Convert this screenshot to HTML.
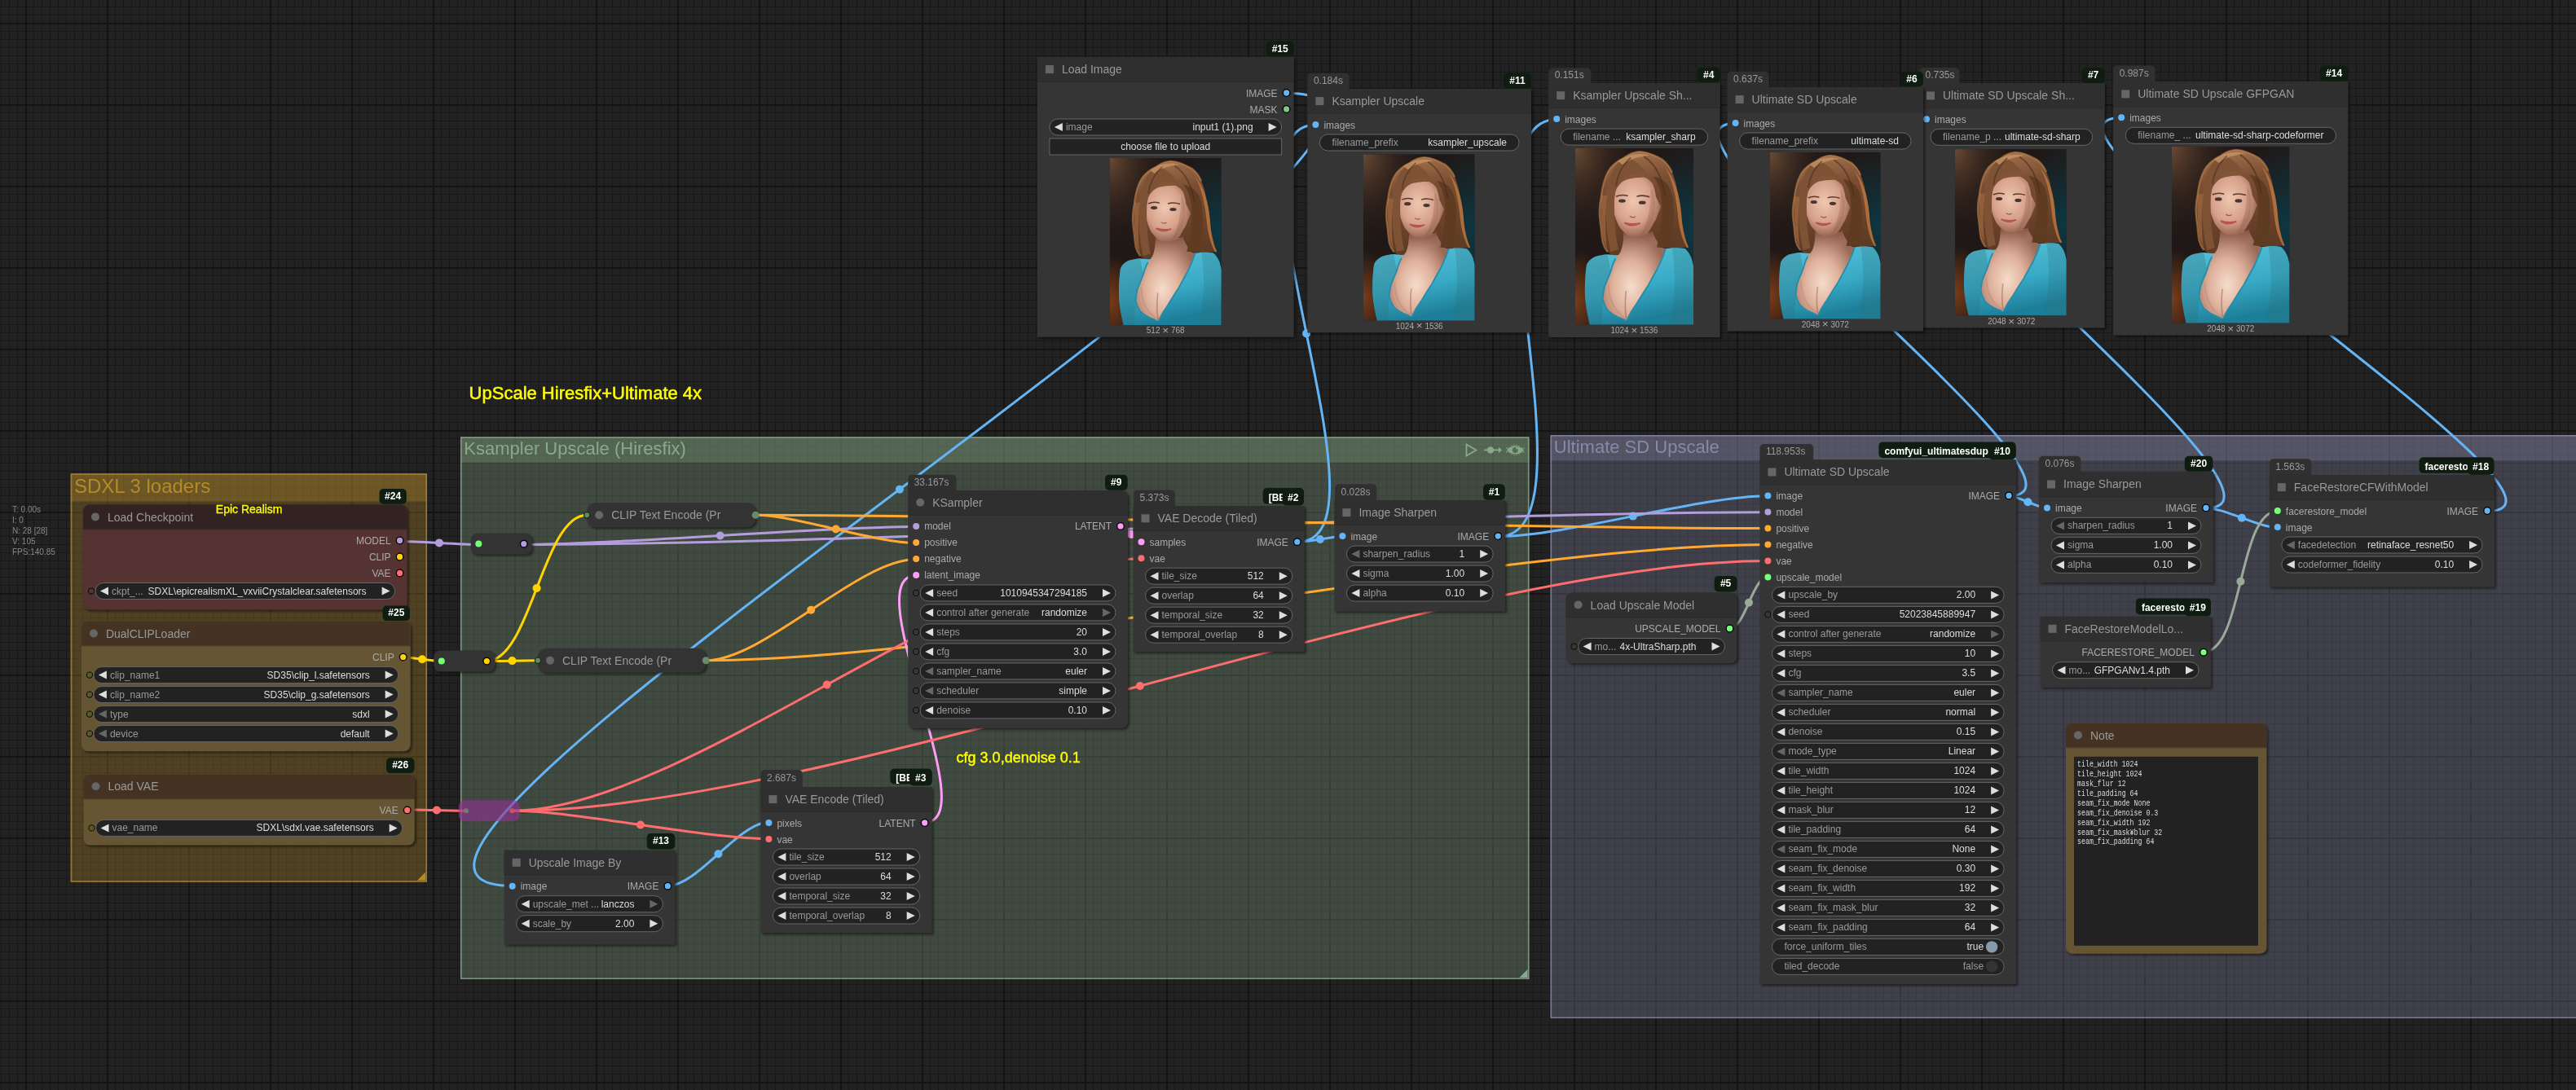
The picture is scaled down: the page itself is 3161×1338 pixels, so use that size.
<!DOCTYPE html>
<html><head><meta charset="utf-8"><title>ComfyUI workflow</title><style>html,body{margin:0;padding:0;background:#222;overflow:hidden;width:3161px;height:1338px}</style></head><body>
<svg width="3161" height="1338" viewBox="0 0 3161 1338" font-family="Liberation Sans, sans-serif" style="display:block">
<defs>
<filter id="nolcd" x="0" y="0" width="3161" height="1338" filterUnits="userSpaceOnUse"><feOffset dx="0" dy="0"/></filter>
<filter id="sh" x="-5%" y="-5%" width="110%" height="110%"><feGaussianBlur stdDeviation="1.5"/></filter>
<pattern id="gmin" width="10" height="10" patternUnits="userSpaceOnUse" x="1" y="8"><rect width="1" height="10" fill="#181818"/><rect width="10" height="1" fill="#181818"/></pattern>
<pattern id="gmaj" width="100" height="100" patternUnits="userSpaceOnUse" x="31" y="28"><rect width="2" height="100" fill="#141414"/><rect width="100" height="2" fill="#141414"/></pattern>
<symbol id="pt" viewBox="0 0 100 150" preserveAspectRatio="none"><defs><radialGradient id="pg1" cx="0.0" cy="0.0" r="0.55"><stop offset="0" stop-color="#6a4a34"/><stop offset="0.5" stop-color="#3e2c22" stop-opacity="0.6"/><stop offset="1" stop-color="#231a18" stop-opacity="0"/></radialGradient><radialGradient id="pg2" cx="1" cy="0.45" r="0.5"><stop offset="0" stop-color="#0c3844"/><stop offset="1" stop-color="#0c3844" stop-opacity="0"/></radialGradient><radialGradient id="pg3" cx="0" cy="0.86" r="0.28"><stop offset="0" stop-color="#7a3c18"/><stop offset="1" stop-color="#7a3c18" stop-opacity="0"/></radialGradient><linearGradient id="phr" x1="0" y1="0" x2="0.15" y2="1"><stop offset="0" stop-color="#a87650"/><stop offset="0.35" stop-color="#7a4e32"/><stop offset="1" stop-color="#5e3a24"/></linearGradient><radialGradient id="pfc" cx="0.42" cy="0.4" r="0.65"><stop offset="0" stop-color="#efc7b0"/><stop offset="0.6" stop-color="#d6a08a"/><stop offset="1" stop-color="#8e5c4a"/></radialGradient><radialGradient id="pch" cx="0.45" cy="0.62" r="0.6"><stop offset="0" stop-color="#f6dccc"/><stop offset="0.5" stop-color="#deb09a"/><stop offset="1" stop-color="#9a6a58"/></radialGradient><linearGradient id="pbl" x1="0" y1="0" x2="0.3" y2="1"><stop offset="0" stop-color="#5cc2d8"/><stop offset="0.6" stop-color="#38aac6"/><stop offset="1" stop-color="#1e7e98"/></linearGradient><filter id="pbf" x="-5%" y="-5%" width="110%" height="110%"><feGaussianBlur stdDeviation="0.55"/></filter><linearGradient id="pnk" x1="0" y1="0" x2="0" y2="1"><stop offset="0" stop-color="#7e4e3e"/><stop offset="1" stop-color="#c08c78" stop-opacity="0"/></linearGradient></defs><rect width="100" height="150" fill="#201816"/><rect width="100" height="150" fill="url(#pg1)"/><rect width="100" height="150" fill="url(#pg2)"/><rect width="100" height="150" fill="url(#pg3)"/><g filter="url(#pbf)"><path d="M54.6 2.8C59 3 64 4 73.8 9.6C78 13 80 16 82 20.6C84 26 85.5 30 86 34.4C87 40 88 44 88.8 48.2C89.5 54 90 58 90.2 61.9C91 67 92 71 92.9 74.3C93.5 78 94.5 81 95.6 83.9L82 85.3L73.8 82.6L60 86L40 88L32.8 92.2L27.3 88C25 85 24 83 23.2 79.8C22.5 75 22 72 21.9 68.8C21 62 20.5 58 20.5 55C20.5 50 21 45 21.9 41.3C22.5 36 23.5 31 24.6 27.5C26 23 28 19 30 16.5C34 12 37 10 41 8.3C45 5 50 3 54.6 2.8Z" fill="url(#phr)"/><path d="M9.6 99C11 96 13 94 16.4 92.2C20 91 24 90.3 27.3 90.1L34.2 90.8L60 88L76.5 85.3L82 84.6C86 84.5 90 84.6 92.9 85.3C95 87 97 90 98.4 93.6L100 100L100 150L12.3 150C10 140 8.5 132 8.2 123.9C8 115 8.5 106 9.6 99Z" fill="url(#pbl)"/><path d="M41 72C41 78 40 84 38.3 88L34.2 93.6C32 97 31 101 30 104.6C28 110 26 114 24.6 118.3C23.8 122 23.3 125 23.2 128C24 132 25.5 135 27.3 137.6C30 140 33 142 35.5 143.1C38 144 40 145 42.3 145.9L43.7 145.9C46 141 49 136 51.9 132.1C55 127 58 122 61.5 117C64 112 67 107 69.7 101.8C72 97 74 93 75.1 89.4L76.5 85.3C74 85 72 84 71 82C69 78 66.5 75 65.6 71.6Z" fill="url(#pch)"/><path d="M41 70C41 78 40.5 83 39 87C46 90 58 88 68 82C67 78 66 75 65.6 70C58 76 48 76 41 70Z" fill="url(#pnk)"/><path d="M43 121Q41.5 134 43.2 145" stroke="#8e5e4c" stroke-width="1.1" fill="none" opacity="0.5"/><path d="M28 116Q29 136 42 144" stroke="#b07e6c" stroke-width="1.2" fill="none" opacity="0.35"/><path d="M32.8 44C33.5 39 34 37 34.2 35.8C37 30 41 27 45 26.1C50 25 55 24.5 58.7 24.8C62 26 64 28 65.6 30.3C67 34 68 38 68.3 41.3L72.4 49.5C71 54 69.5 57 68.3 60.5C66 64 64.5 67 62.8 70.2C60 73 57 74.5 54.6 75C51 75.5 48 75 45 74.3C42 72 39 69 36.9 66C35 62 33.5 58 32.8 55C32.5 51 32.5 47 32.8 44Z" fill="url(#pfc)"/><path d="M64 34C69 42 68.5 54 64 64C61 69 58 72.5 55 74.5C60 66 64 54 64 34Z" fill="#7e4e40" opacity="0.25"/><path d="M34.5 41Q39 38.8 44.5 40.5" stroke="#5a3a2c" stroke-width="1.1" fill="none"/><path d="M52 41Q57 39.3 63 41.3" stroke="#5a3a2c" stroke-width="1.1" fill="none"/><ellipse cx="39.6" cy="44.7" rx="3" ry="1.5" fill="#4a3630"/><ellipse cx="56.7" cy="46.1" rx="3" ry="1.5" fill="#4a3630"/><path d="M46 57.5Q48 59.5 51 58" stroke="#9a6050" stroke-width="0.9" fill="none"/><path d="M41.5 63.2Q47.5 67.8 55 63.6Q48 65.2 41.5 63.2Z" fill="#b85a58" stroke="#b45654" stroke-width="1.2"/><path d="M40 9C31 16 26.5 28 26 42C25.5 58 26.5 74 30 88L36.5 86C33.5 72 32.5 56 33.2 42C34 32 38 26 45 23C50 21 56 21 62 24C57 15 48 6 40 9Z" fill="#7e5236"/><path d="M66 24C71 30 73 38 73.5 48C74 60 72 72 69 84L80 85C83 72 84 58 83 46C82 34 77 26 66 24Z" fill="#5e3a24"/><path d="M76 16C82 26 85 40 86.5 54C87.5 66 90 77 94.5 84.5L96 84C92 76 90.5 66 89.8 56C88.5 42 86 28 76 16Z" fill="#c47c42" opacity="0.75"/><path d="M22 40C21.5 52 22 66 24 78L27 86C25 72 25 54 27 40Z" fill="#a66c42" opacity="0.6"/><path d="M36 11C44 5 54 3.5 63 6C54 7 46 9 40 14Z" fill="#c49466" opacity="0.8"/><path d="M47 8C40 14 36 22 34.5 32" stroke="#4e3020" stroke-width="1.3" fill="none" opacity="0.6"/><path d="M58 7C66 12 73 22 76 40" stroke="#4a2c1c" stroke-width="1.3" fill="none" opacity="0.6"/><path d="M27.3 88C25 85 24 83 23.2 79.8C22.5 75 22 72 21.9 68.8C21 62 20.5 58 20.5 55C20.5 50 21 45 21.9 41.3C22.5 36 23.5 31 24.6 27.5C26 23 28 19 30 16.5C34 12 37 10 41 8.3C45 5 50 3 54.6 2.8C59 3 64 4 73.8 9.6C78 13 80 16 82 20.6" stroke="#c88a50" stroke-width="1.6" fill="none" opacity="0.55"/><path d="M9.6 99C11 96 13 94 16.4 92.2C20 91 24 90.3 27.3 90.1L30 104.6L24.6 118.3L23.2 128L22 150L12.3 150C10 140 8.5 132 8.2 123.9C8 115 8.5 106 9.6 99Z" fill="#2a6e7c" opacity="0.3"/><path d="M82 84.6C86 84.5 90 84.6 92.9 85.3C95 87 97 90 98.4 93.6L100 100L100 150L80 150C84 130 86 110 82 84.6Z" fill="#2a6e7c" opacity="0.25"/><path d="M34.2 93.6C32 97 31 101 30 104.6C28 110 26 114 24.6 118.3C23.8 122 23.3 125 23.2 128C24 132 25.5 135 27.3 137.6C30 140 33 142 35.5 143.1C38 144 40 145 42.3 145.9" stroke="#268ca8" stroke-width="1.3" fill="none"/><path d="M43.7 145.9C46 141 49 136 51.9 132.1C55 127 58 122 61.5 117C64 112 67 107 69.7 101.8C72 97 74 93 75.1 89.4L76.5 85.3" stroke="#268ca8" stroke-width="1.3" fill="none"/></g></symbol>
</defs>
<g filter="url(#nolcd)">
<rect width="3161" height="1338" fill="#222"/>
<rect width="3161" height="1338" fill="url(#gmin)"/>
<rect width="3161" height="1338" fill="url(#gmaj)"/>
<text x="15" y="629" font-size="10" fill="#888">T: 0.00s</text>
<text x="15" y="642" font-size="10" fill="#888">I: 0</text>
<text x="15" y="655" font-size="10" fill="#888">N: 28 [28]</text>
<text x="15" y="668" font-size="10" fill="#888">V: 105</text>
<text x="15" y="681" font-size="10" fill="#888">FPS:140.85</text>
<rect x="86.7" y="581.3" width="437.3" height="501.5" fill="rgba(181,139,42,0.3)"/>
<rect x="86.7" y="581.3" width="437.3" height="34.2" fill="rgba(181,139,42,0.3)"/>
<rect x="87.5" y="582.1" width="435.7" height="499.9" fill="none" stroke="#b58b2a" stroke-width="1.6" stroke-opacity="0.8"/>
<path d="M522 1070.8L522 1080.8L512 1080.8Z" fill="#b58b2a"/>
<text x="91" y="604.9" font-size="24" fill="#b58b2a">SDXL 3 loaders</text>
<rect x="565" y="536.3" width="1311.5" height="665.7" fill="rgba(136,170,136,0.3)"/>
<rect x="565" y="536.3" width="1311.5" height="31.4" fill="rgba(136,170,136,0.3)"/>
<rect x="565.8" y="537.1" width="1309.9" height="664.1" fill="none" stroke="#8A8" stroke-width="1.6" stroke-opacity="0.8"/>
<path d="M1874.5 1190L1874.5 1200L1864.5 1200Z" fill="#8A8"/>
<text x="569.3" y="557.9" font-size="22" fill="#8A8">Ksampler Upscale (Hiresfix)</text>
<rect x="1902.5" y="534" width="1400" height="716" fill="rgba(136,136,170,0.3)"/>
<rect x="1902.5" y="534" width="1400" height="31.4" fill="rgba(136,136,170,0.3)"/>
<rect x="1903.3" y="534.8" width="1398.4" height="714.4" fill="none" stroke="#88A" stroke-width="1.6" stroke-opacity="0.8"/>
<path d="M3300.5 1238L3300.5 1248L3290.5 1248Z" fill="#88A"/>
<text x="1906.8" y="555.6" font-size="22" fill="#88A">Ultimate SD Upscale</text>
<path d="M1799.5 545.5L1811.5 552.5L1799.5 559.5Z" fill="none" stroke="#8A8" stroke-width="1.8"/>
<path d="M1821 552.4H1840" stroke="#8A8" stroke-width="1.8"/><circle cx="1829" cy="552.4" r="4.2" fill="#8A8"/><path d="M1839 548.5L1843 552.4L1839 556.3Z" fill="#8A8"/>
<path d="M1848.8 552.4Q1859.4 542.6 1870 552.4Q1859.4 562.2 1848.8 552.4Z" fill="#8A8"/><circle cx="1859.2" cy="552.4" r="3.5" fill="#566a56"/><rect x="1860" y="549.7" width="1.6" height="1.6" fill="#8A8"/>
<path d="M1851.9 549.9V548.7M1851.9 554.9V556.1M1854.9 548.3V546.7M1854.9 556.5V558.1M1857.9 547.5V545.7M1857.9 557.3V559.1M1860.9 547.5V545.7M1860.9 557.3V559.1M1863.9 548.3V546.7M1863.9 556.5V558.1M1866.9 549.9V548.7M1866.9 554.9V556.1M1848.3 549.5L1850 550.8M1848.3 555.3L1850 554M1870.5 549.5L1868.8 550.8M1870.5 555.3L1868.8 554" stroke="#8A8" stroke-width="1.1" fill="none"/>
<text x="575.6" y="490" font-size="22" fill="#ff0" stroke="#ff0" stroke-width="0.5">UpScale Hiresfix+Ultimate 4x</text>
<text x="1173.6" y="936.3" font-size="18" fill="#ff0" stroke="#ff0" stroke-width="0.4">cfg 3.0,denoise 0.1</text>
<path d="M1579 114.2C1919.1 114.2 288.6 1087.4 628.7 1087.4" fill="none" stroke="#64B5F6" stroke-width="3"/>
<circle cx="1103.9" cy="600.8" r="5" fill="#64B5F6"/>
<path d="M1591.8 665.4C1719.9 665.4 1486.3 153.3 1614.4 153.3" fill="none" stroke="#64B5F6" stroke-width="3"/>
<circle cx="1603.1" cy="409.4" r="5" fill="#64B5F6"/>
<path d="M1591.8 665.4C1606 665.4 1633.8 658.6 1648 658.6" fill="none" stroke="#64B5F6" stroke-width="3"/>
<circle cx="1619.9" cy="662" r="5" fill="#64B5F6"/>
<path d="M1838.2 658.6C1967.5 658.6 1781.2 146.4 1910.5 146.4" fill="none" stroke="#64B5F6" stroke-width="3"/>
<circle cx="1874.3" cy="402.5" r="5" fill="#64B5F6"/>
<path d="M1838.2 658.6C1922 658.6 2085.7 608.7 2169.5 608.7" fill="none" stroke="#64B5F6" stroke-width="3"/>
<circle cx="2003.8" cy="633.6" r="5" fill="#64B5F6"/>
<path d="M819.4 1087.4C856 1087.4 906.8 1009.3 943.4 1009.3" fill="none" stroke="#64B5F6" stroke-width="3"/>
<circle cx="881.4" cy="1048.3" r="5" fill="#64B5F6"/>
<path d="M2464.8 608.7C2606.6 608.7 1987.8 151.2 2129.6 151.2" fill="none" stroke="#64B5F6" stroke-width="3"/>
<circle cx="2297.2" cy="379.9" r="5" fill="#64B5F6"/>
<path d="M2464.8 608.7C2477.2 608.7 2499.6 623.7 2512 623.7" fill="none" stroke="#64B5F6" stroke-width="3"/>
<circle cx="2488.4" cy="616.2" r="5" fill="#64B5F6"/>
<path d="M2707 623.7C2853.8 623.7 2216.7 147.5 2363.5 147.5" fill="none" stroke="#64B5F6" stroke-width="3"/>
<circle cx="2535.2" cy="385.6" r="5" fill="#64B5F6"/>
<path d="M2707 623.7C2729.7 623.7 2772.1 647.6 2794.8 647.6" fill="none" stroke="#64B5F6" stroke-width="3"/>
<circle cx="2750.9" cy="635.7" r="5" fill="#64B5F6"/>
<path d="M3052 627.4C3216.8 627.4 2438.4 144.5 2603.2 144.5" fill="none" stroke="#64B5F6" stroke-width="3"/>
<circle cx="2827.6" cy="385.9" r="5" fill="#64B5F6"/>
<path d="M490.6 664.5C514.8 664.5 563.2 668.4 587.4 668.4" fill="none" stroke="#B39DDB" stroke-width="3"/>
<circle cx="539" cy="666.4" r="5" fill="#B39DDB"/>
<path d="M643.2 668.4C763.6 668.4 1003.8 646.6 1124.2 646.6" fill="none" stroke="#B39DDB" stroke-width="3"/>
<circle cx="883.7" cy="657.5" r="5" fill="#B39DDB"/>
<path d="M643.2 668.4C1024.9 668.4 1787.7 628.7 2169.4 628.7" fill="none" stroke="#B39DDB" stroke-width="3"/>
<circle cx="1406.3" cy="648.5" r="5" fill="#B39DDB"/>
<path d="M494.5 806.8C506.4 806.8 529.9 811.6 541.8 811.6" fill="none" stroke="#FFD500" stroke-width="3"/>
<circle cx="518.1" cy="809.2" r="5" fill="#FFD500"/>
<path d="M597 811.6C651.4 811.6 665.8 632.3 720.2 632.3" fill="none" stroke="#FFD500" stroke-width="3"/>
<circle cx="658.6" cy="722" r="5" fill="#FFD500"/>
<path d="M597 811.6C612.8 811.6 644.2 810.7 660 810.7" fill="none" stroke="#FFD500" stroke-width="3"/>
<circle cx="628.5" cy="811.1" r="5" fill="#FFD500"/>
<path d="M927.2 632.3C977.2 632.3 1074.2 666.6 1124.2 666.6" fill="none" stroke="#FFA931" stroke-width="3"/>
<circle cx="1025.7" cy="649.5" r="5" fill="#FFA931"/>
<path d="M927.2 632.3C1237.8 632.3 1858.8 648.6 2169.4 648.6" fill="none" stroke="#FFA931" stroke-width="3"/>
<circle cx="1548.3" cy="640.5" r="5" fill="#FFA931"/>
<path d="M866.2 810.7C937.8 810.7 1052.6 686.6 1124.2 686.6" fill="none" stroke="#FFA931" stroke-width="3"/>
<circle cx="995.2" cy="748.7" r="5" fill="#FFA931"/>
<path d="M866.2 810.7C1193.9 810.7 1841.7 668.6 2169.4 668.6" fill="none" stroke="#FFA931" stroke-width="3"/>
<circle cx="1517.8" cy="739.7" r="5" fill="#FFA931"/>
<path d="M1375 646.6C1383 646.6 1393 665.4 1401 665.4" fill="none" stroke="#FF9CF9" stroke-width="3"/>
<circle cx="1388" cy="656" r="5" fill="#FF9CF9"/>
<path d="M1134.7 1009.3C1210.4 1009.3 1048.5 706.5 1124.2 706.5" fill="none" stroke="#FF9CF9" stroke-width="3"/>
<circle cx="1129.5" cy="857.9" r="5" fill="#FF9CF9"/>
<path d="M499.6 993.8C517.7 993.8 554 995.3 572.1 995.3" fill="none" stroke="#FF6E6E" stroke-width="3"/>
<circle cx="535.9" cy="994.5" r="5" fill="#FF6E6E"/>
<path d="M628.4 995.3C707.6 995.3 864.2 1029.6 943.4 1029.6" fill="none" stroke="#FF6E6E" stroke-width="3"/>
<circle cx="785.9" cy="1012.5" r="5" fill="#FF6E6E"/>
<path d="M628.4 995.3C836.5 995.3 1192.9 685.7 1401 685.7" fill="none" stroke="#FF6E6E" stroke-width="3"/>
<circle cx="1014.7" cy="840.5" r="5" fill="#FF6E6E"/>
<path d="M628.4 995.3C1021.2 995.3 1776.6 688.6 2169.4 688.6" fill="none" stroke="#FF6E6E" stroke-width="3"/>
<circle cx="1398.9" cy="842" r="5" fill="#FF6E6E"/>
<path d="M2122.5 771C2142 771 2149.9 708.6 2169.4 708.6" fill="none" stroke="#9A9" stroke-width="3"/>
<circle cx="2146" cy="739.8" r="5" fill="#9A9"/>
<path d="M2704 800.1C2752.8 800.1 2746 627.4 2794.8 627.4" fill="none" stroke="#9A9" stroke-width="3"/>
<circle cx="2749.4" cy="713.8" r="5" fill="#9A9"/>
<rect x="465.5" y="600" width="33.3" height="18.8" rx="5" fill="#0f1c10"/>
<text x="482.1" y="613" font-size="12" fill="#fff" text-anchor="middle" font-weight="bold">#24</text>
<rect x="104" y="621.5" width="397.6" height="129.1" rx="8" fill="rgba(0,0,0,0.5)" filter="url(#sh)"/>
<rect x="102" y="619.5" width="397.6" height="129.1" rx="8" fill="#533"/>
<path d="M102 649.5V627.5A8 8 0 0 1 110 619.5H491.6A8 8 0 0 1 499.6 627.5V649.5Z" fill="#322"/>
<circle cx="117" cy="634.4" r="5" fill="#666"/>
<rect x="102" y="649.5" width="397.6" height="1" fill="rgba(0,0,0,0.18)"/>
<text x="132" y="639.5" font-size="14" fill="#999">Load Checkpoint</text>
<circle cx="490.6" cy="663.5" r="4.3" fill="#B39DDB" stroke="#000" stroke-width="1.3"/>
<text x="479.6" y="668" font-size="12" fill="#AAA" text-anchor="end">MODEL</text>
<circle cx="490.6" cy="683.5" r="4.3" fill="#FFD500" stroke="#000" stroke-width="1.3"/>
<text x="479.6" y="688" font-size="12" fill="#AAA" text-anchor="end">CLIP</text>
<circle cx="490.6" cy="703.5" r="4.3" fill="#FF6E6E" stroke="#000" stroke-width="1.3"/>
<text x="479.6" y="708" font-size="12" fill="#AAA" text-anchor="end">VAE</text>
<circle cx="112" cy="725.5" r="3.6" fill="rgba(0,128,0,0.12)" stroke="#0a0a0a" stroke-width="1.05"/>
<rect x="117" y="715.5" width="367.6" height="20" rx="10" fill="#222" stroke="#666" stroke-width="1"/>
<path d="M133 720.5L123 725.5L133 730.5Z" fill="#DDD"/>
<path d="M468.6 720.5L478.6 725.5L468.6 730.5Z" fill="#DDD"/>
<text x="137" y="729.5" font-size="12" fill="#999">ckpt_...</text>
<text x="449.6" y="729.5" font-size="12" fill="#DDD" text-anchor="end">SDXL\epicrealismXL_vxviiCrystalclear.safetensors</text>
<text x="305.7" y="630.4" font-size="14" fill="#ff0" text-anchor="middle" stroke="#ff0" stroke-width="0.3">Epic Realism</text>
<rect x="469.6" y="743.4" width="33.4" height="18.7" rx="5" fill="#0f1c10"/>
<text x="486.3" y="756.4" font-size="12" fill="#fff" text-anchor="middle" font-weight="bold">#25</text>
<rect x="101.9" y="764.6" width="403.8" height="159.7" rx="8" fill="rgba(0,0,0,0.5)" filter="url(#sh)"/>
<rect x="99.9" y="762.6" width="403.8" height="159.7" rx="8" fill="#653"/>
<path d="M99.9 792.6V770.6A8 8 0 0 1 107.9 762.6H495.7A8 8 0 0 1 503.7 770.6V792.6Z" fill="#432"/>
<circle cx="114.9" cy="777.5" r="5" fill="#666"/>
<rect x="99.9" y="792.6" width="403.8" height="1" fill="rgba(0,0,0,0.18)"/>
<text x="129.9" y="782.6" font-size="14" fill="#999">DualCLIPLoader</text>
<circle cx="494.7" cy="806.6" r="4.3" fill="#FFD500" stroke="#000" stroke-width="1.3"/>
<text x="483.7" y="811.1" font-size="12" fill="#AAA" text-anchor="end">CLIP</text>
<circle cx="109.9" cy="828.6" r="3.6" fill="rgba(0,128,0,0.12)" stroke="#0a0a0a" stroke-width="1.05"/>
<rect x="114.9" y="818.6" width="373.8" height="20" rx="10" fill="#222" stroke="#666" stroke-width="1"/>
<path d="M130.9 823.6L120.9 828.6L130.9 833.6Z" fill="#DDD"/>
<path d="M472.7 823.6L482.7 828.6L472.7 833.6Z" fill="#DDD"/>
<text x="134.9" y="832.6" font-size="12" fill="#999">clip_name1</text>
<text x="453.7" y="832.6" font-size="12" fill="#DDD" text-anchor="end">SD35\clip_l.safetensors</text>
<circle cx="109.9" cy="852.6" r="3.6" fill="rgba(0,128,0,0.12)" stroke="#0a0a0a" stroke-width="1.05"/>
<rect x="114.9" y="842.6" width="373.8" height="20" rx="10" fill="#222" stroke="#666" stroke-width="1"/>
<path d="M130.9 847.6L120.9 852.6L130.9 857.6Z" fill="#DDD"/>
<path d="M472.7 847.6L482.7 852.6L472.7 857.6Z" fill="#DDD"/>
<text x="134.9" y="856.6" font-size="12" fill="#999">clip_name2</text>
<text x="453.7" y="856.6" font-size="12" fill="#DDD" text-anchor="end">SD35\clip_g.safetensors</text>
<circle cx="109.9" cy="876.6" r="3.6" fill="rgba(0,128,0,0.12)" stroke="#0a0a0a" stroke-width="1.05"/>
<rect x="114.9" y="866.6" width="373.8" height="20" rx="10" fill="#222" stroke="#666" stroke-width="1"/>
<path d="M130.9 871.6L120.9 876.6L130.9 881.6Z" fill="#666"/>
<path d="M472.7 871.6L482.7 876.6L472.7 881.6Z" fill="#DDD"/>
<text x="134.9" y="880.6" font-size="12" fill="#999">type</text>
<text x="453.7" y="880.6" font-size="12" fill="#DDD" text-anchor="end">sdxl</text>
<circle cx="109.9" cy="900.6" r="3.6" fill="rgba(0,128,0,0.12)" stroke="#0a0a0a" stroke-width="1.05"/>
<rect x="114.9" y="890.6" width="373.8" height="20" rx="10" fill="#222" stroke="#666" stroke-width="1"/>
<path d="M130.9 895.6L120.9 900.6L130.9 905.6Z" fill="#666"/>
<path d="M472.7 895.6L482.7 900.6L472.7 905.6Z" fill="#DDD"/>
<text x="134.9" y="904.6" font-size="12" fill="#999">device</text>
<text x="453.7" y="904.6" font-size="12" fill="#DDD" text-anchor="end">default</text>
<rect x="474" y="930.2" width="34.5" height="18.8" rx="5" fill="#0f1c10"/>
<text x="491.2" y="943.2" font-size="12" fill="#fff" text-anchor="middle" font-weight="bold">#26</text>
<rect x="104.5" y="952.4" width="406.2" height="87.1" rx="8" fill="rgba(0,0,0,0.5)" filter="url(#sh)"/>
<rect x="102.5" y="950.4" width="406.2" height="87.1" rx="8" fill="#653"/>
<path d="M102.5 980.4V958.4A8 8 0 0 1 110.5 950.4H500.7A8 8 0 0 1 508.7 958.4V980.4Z" fill="#432"/>
<circle cx="117.5" cy="965.3" r="5" fill="#666"/>
<rect x="102.5" y="980.4" width="406.2" height="1" fill="rgba(0,0,0,0.18)"/>
<text x="132.5" y="970.4" font-size="14" fill="#999">Load VAE</text>
<circle cx="499.7" cy="994.4" r="4.3" fill="#FF6E6E" stroke="#000" stroke-width="1.3"/>
<text x="488.7" y="998.9" font-size="12" fill="#AAA" text-anchor="end">VAE</text>
<circle cx="112.5" cy="1016.4" r="3.6" fill="rgba(0,128,0,0.12)" stroke="#0a0a0a" stroke-width="1.05"/>
<rect x="117.5" y="1006.4" width="376.2" height="20" rx="10" fill="#222" stroke="#666" stroke-width="1"/>
<path d="M133.5 1011.4L123.5 1016.4L133.5 1021.4Z" fill="#DDD"/>
<path d="M477.7 1011.4L487.7 1016.4L477.7 1021.4Z" fill="#DDD"/>
<text x="137.5" y="1020.4" font-size="12" fill="#999">vae_name</text>
<text x="458.7" y="1020.4" font-size="12" fill="#DDD" text-anchor="end">SDXL\sdxl.vae.safetensors</text>
<rect x="579.8" y="656.6" width="75" height="26" rx="8" fill="rgba(0,0,0,0.5)" filter="url(#sh)"/>
<rect x="577.8" y="654.6" width="75" height="26" rx="8" fill="#333"/>
<circle cx="587.3" cy="667.6" r="4" fill="#7F7"/>
<circle cx="642.8" cy="667.6" r="4.3" fill="#B39DDB" stroke="#000" stroke-width="1.3"/>
<rect x="534.3" y="800.6" width="75" height="26" rx="8" fill="rgba(0,0,0,0.5)" filter="url(#sh)"/>
<rect x="532.3" y="798.6" width="75" height="26" rx="8" fill="#333"/>
<circle cx="541.8" cy="811.6" r="4" fill="#7F7"/>
<circle cx="597.3" cy="811.6" r="4.3" fill="#FFD500" stroke="#000" stroke-width="1.3"/>
<rect x="562.6" y="982.3" width="75" height="26" rx="8" fill="rgba(150,50,150,0.6)"/>
<circle cx="572.1" cy="995.3" r="3" fill="#777"/>
<circle cx="628.4" cy="995.3" r="3" fill="#c55"/>
<rect x="722.2" y="619.3" width="207" height="30" rx="10" fill="rgba(0,0,0,0.5)" filter="url(#sh)"/>
<rect x="720.2" y="617.3" width="207" height="30" rx="10" fill="#333"/>
<circle cx="735.2" cy="632.3" r="5" fill="#666"/>
<text x="750.2" y="637.3" font-size="14" fill="#999">CLIP Text Encode (Pr</text>
<circle cx="720.2" cy="632.3" r="3.6" fill="#5c8f5c" stroke="#1c2c1c" stroke-width="1.3"/>
<circle cx="927.2" cy="632.3" r="4.5" fill="#6b8a6b"/>
<rect x="662" y="797.7" width="206.3" height="30" rx="10" fill="rgba(0,0,0,0.5)" filter="url(#sh)"/>
<rect x="660" y="795.7" width="206.3" height="30" rx="10" fill="#333"/>
<circle cx="675" cy="810.7" r="5" fill="#666"/>
<text x="690" y="815.7" font-size="14" fill="#999">CLIP Text Encode (Pr</text>
<circle cx="660" cy="810.7" r="3.6" fill="#5c8f5c" stroke="#1c2c1c" stroke-width="1.3"/>
<circle cx="866.3" cy="810.7" r="4.5" fill="#6b8a6b"/>
<rect x="793.7" y="1023.1" width="34.7" height="19.3" rx="5" fill="#0f1c10"/>
<text x="811" y="1036.3" font-size="12" fill="#fff" text-anchor="middle" font-weight="bold">#13</text>
<rect x="620.7" y="1045.7" width="209.7" height="115.9" rx="0" fill="rgba(0,0,0,0.5)" filter="url(#sh)"/>
<rect x="618.7" y="1043.7" width="209.7" height="115.9" rx="0" fill="#353535"/>
<rect x="618.7" y="1043.7" width="209.7" height="30" fill="#2f2f2f"/>
<rect x="628.7" y="1053.8" width="10" height="10" fill="#666"/>
<rect x="618.7" y="1073.7" width="209.7" height="1" fill="rgba(0,0,0,0.18)"/>
<text x="648.7" y="1063.7" font-size="14" fill="#999">Upscale Image By</text>
<circle cx="628.7" cy="1087.7" r="4" fill="#64B5F6"/>
<text x="638.7" y="1092.2" font-size="12" fill="#AAA">image</text>
<circle cx="819.4" cy="1087.7" r="4.3" fill="#64B5F6" stroke="#000" stroke-width="1.3"/>
<text x="808.4" y="1092.2" font-size="12" fill="#AAA" text-anchor="end">IMAGE</text>
<rect x="633.7" y="1099.7" width="179.7" height="20" rx="10" fill="#222" stroke="#666" stroke-width="1"/>
<path d="M649.7 1104.7L639.7 1109.7L649.7 1114.7Z" fill="#DDD"/>
<path d="M797.4 1104.7L807.4 1109.7L797.4 1114.7Z" fill="#666"/>
<text x="653.7" y="1113.7" font-size="12" fill="#999">upscale_met ...</text>
<text x="778.4" y="1113.7" font-size="12" fill="#DDD" text-anchor="end">lanczos</text>
<rect x="633.7" y="1123.7" width="179.7" height="20" rx="10" fill="#222" stroke="#666" stroke-width="1"/>
<path d="M649.7 1128.7L639.7 1133.7L649.7 1138.7Z" fill="#DDD"/>
<path d="M797.4 1128.7L807.4 1133.7L797.4 1138.7Z" fill="#DDD"/>
<text x="653.7" y="1137.7" font-size="12" fill="#999">scale_by</text>
<text x="778.4" y="1137.7" font-size="12" fill="#DDD" text-anchor="end">2.00</text>
<rect x="933.4" y="945.1" width="51.4" height="26.9" rx="5" fill="#303030"/>
<text x="940.9" y="959.1" font-size="12" fill="#999">2.687s</text>
<rect x="1092.3" y="943.5" width="51.4" height="18.9" rx="5" fill="#0f1c10"/>
<text x="1099.3" y="958.8" font-size="12" fill="#fff" font-weight="bold">[BE</text>
<rect x="1116" y="945.5" width="27.7" height="18.9" rx="5" fill="#0f1c10"/>
<text x="1129.8" y="958.8" font-size="12" fill="#fff" text-anchor="middle" font-weight="bold">#3</text>
<rect x="935.4" y="968" width="210.3" height="179.2" rx="0" fill="rgba(0,0,0,0.5)" filter="url(#sh)"/>
<rect x="933.4" y="966" width="210.3" height="179.2" rx="0" fill="#353535"/>
<rect x="933.4" y="966" width="210.3" height="30" fill="#2f2f2f"/>
<rect x="943.4" y="976.1" width="10" height="10" fill="#666"/>
<rect x="933.4" y="996" width="210.3" height="1" fill="rgba(0,0,0,0.18)"/>
<text x="963.4" y="986" font-size="14" fill="#999">VAE Encode (Tiled)</text>
<circle cx="943.4" cy="1010" r="4" fill="#64B5F6"/>
<text x="953.4" y="1014.5" font-size="12" fill="#AAA">pixels</text>
<circle cx="943.4" cy="1030" r="4" fill="#FF6E6E"/>
<text x="953.4" y="1034.5" font-size="12" fill="#AAA">vae</text>
<circle cx="1134.7" cy="1010" r="4.3" fill="#FF9CF9" stroke="#000" stroke-width="1.3"/>
<text x="1123.7" y="1014.5" font-size="12" fill="#AAA" text-anchor="end">LATENT</text>
<rect x="948.4" y="1042" width="180.3" height="20" rx="10" fill="#222" stroke="#666" stroke-width="1"/>
<path d="M964.4 1047L954.4 1052L964.4 1057Z" fill="#DDD"/>
<path d="M1112.7 1047L1122.7 1052L1112.7 1057Z" fill="#DDD"/>
<text x="968.4" y="1056" font-size="12" fill="#999">tile_size</text>
<text x="1093.7" y="1056" font-size="12" fill="#DDD" text-anchor="end">512</text>
<rect x="948.4" y="1066" width="180.3" height="20" rx="10" fill="#222" stroke="#666" stroke-width="1"/>
<path d="M964.4 1071L954.4 1076L964.4 1081Z" fill="#DDD"/>
<path d="M1112.7 1071L1122.7 1076L1112.7 1081Z" fill="#DDD"/>
<text x="968.4" y="1080" font-size="12" fill="#999">overlap</text>
<text x="1093.7" y="1080" font-size="12" fill="#DDD" text-anchor="end">64</text>
<rect x="948.4" y="1090" width="180.3" height="20" rx="10" fill="#222" stroke="#666" stroke-width="1"/>
<path d="M964.4 1095L954.4 1100L964.4 1105Z" fill="#DDD"/>
<path d="M1112.7 1095L1122.7 1100L1112.7 1105Z" fill="#DDD"/>
<text x="968.4" y="1104" font-size="12" fill="#999">temporal_size</text>
<text x="1093.7" y="1104" font-size="12" fill="#DDD" text-anchor="end">32</text>
<rect x="948.4" y="1114" width="180.3" height="20" rx="10" fill="#222" stroke="#666" stroke-width="1"/>
<path d="M964.4 1119L954.4 1124L964.4 1129Z" fill="#DDD"/>
<path d="M1112.7 1119L1122.7 1124L1112.7 1129Z" fill="#DDD"/>
<text x="968.4" y="1128" font-size="12" fill="#999">temporal_overlap</text>
<text x="1093.7" y="1128" font-size="12" fill="#DDD" text-anchor="end">8</text>
<rect x="1114.2" y="582.7" width="59.4" height="26" rx="5" fill="#303030"/>
<text x="1121.7" y="596.3" font-size="12" fill="#999">33.167s</text>
<rect x="1356" y="582.7" width="27.7" height="19.1" rx="5" fill="#0f1c10"/>
<text x="1369.8" y="595.9" font-size="12" fill="#fff" text-anchor="middle" font-weight="bold">#9</text>
<rect x="1116.2" y="603.9" width="269.8" height="292.1" rx="8" fill="rgba(0,0,0,0.5)" filter="url(#sh)"/>
<rect x="1114.2" y="601.9" width="269.8" height="292.1" rx="8" fill="#353535"/>
<path d="M1114.2 631.9V609.9A8 8 0 0 1 1122.2 601.9H1376A8 8 0 0 1 1384 609.9V631.9Z" fill="#2f2f2f"/>
<circle cx="1129.2" cy="616.8" r="5" fill="#666"/>
<rect x="1114.2" y="631.9" width="269.8" height="1" fill="rgba(0,0,0,0.18)"/>
<text x="1144.2" y="621.9" font-size="14" fill="#999">KSampler</text>
<circle cx="1124.2" cy="645.9" r="4" fill="#B39DDB"/>
<text x="1134.2" y="650.4" font-size="12" fill="#AAA">model</text>
<circle cx="1124.2" cy="665.9" r="4" fill="#FFA931"/>
<text x="1134.2" y="670.4" font-size="12" fill="#AAA">positive</text>
<circle cx="1124.2" cy="685.9" r="4" fill="#FFA931"/>
<text x="1134.2" y="690.4" font-size="12" fill="#AAA">negative</text>
<circle cx="1124.2" cy="705.9" r="4" fill="#FF9CF9"/>
<text x="1134.2" y="710.4" font-size="12" fill="#AAA">latent_image</text>
<circle cx="1375" cy="645.9" r="4.3" fill="#FF9CF9" stroke="#000" stroke-width="1.3"/>
<text x="1364" y="650.4" font-size="12" fill="#AAA" text-anchor="end">LATENT</text>
<circle cx="1124.2" cy="727.9" r="3.6" fill="rgba(0,128,0,0.12)" stroke="#0a0a0a" stroke-width="1.05"/>
<rect x="1129.2" y="717.9" width="239.8" height="20" rx="10" fill="#222" stroke="#666" stroke-width="1"/>
<path d="M1145.2 722.9L1135.2 727.9L1145.2 732.9Z" fill="#DDD"/>
<path d="M1353 722.9L1363 727.9L1353 732.9Z" fill="#DDD"/>
<text x="1149.2" y="731.9" font-size="12" fill="#999">seed</text>
<text x="1334" y="731.9" font-size="12" fill="#DDD" text-anchor="end">1010945347294185</text>
<rect x="1129.2" y="741.9" width="239.8" height="20" rx="10" fill="#222" stroke="#666" stroke-width="1"/>
<path d="M1145.2 746.9L1135.2 751.9L1145.2 756.9Z" fill="#DDD"/>
<path d="M1353 746.9L1363 751.9L1353 756.9Z" fill="#666"/>
<text x="1149.2" y="755.9" font-size="12" fill="#999">control after generate</text>
<text x="1334" y="755.9" font-size="12" fill="#DDD" text-anchor="end">randomize</text>
<circle cx="1124.2" cy="775.9" r="3.6" fill="rgba(0,128,0,0.12)" stroke="#0a0a0a" stroke-width="1.05"/>
<rect x="1129.2" y="765.9" width="239.8" height="20" rx="10" fill="#222" stroke="#666" stroke-width="1"/>
<path d="M1145.2 770.9L1135.2 775.9L1145.2 780.9Z" fill="#DDD"/>
<path d="M1353 770.9L1363 775.9L1353 780.9Z" fill="#DDD"/>
<text x="1149.2" y="779.9" font-size="12" fill="#999">steps</text>
<text x="1334" y="779.9" font-size="12" fill="#DDD" text-anchor="end">20</text>
<circle cx="1124.2" cy="799.9" r="3.6" fill="rgba(0,128,0,0.12)" stroke="#0a0a0a" stroke-width="1.05"/>
<rect x="1129.2" y="789.9" width="239.8" height="20" rx="10" fill="#222" stroke="#666" stroke-width="1"/>
<path d="M1145.2 794.9L1135.2 799.9L1145.2 804.9Z" fill="#DDD"/>
<path d="M1353 794.9L1363 799.9L1353 804.9Z" fill="#DDD"/>
<text x="1149.2" y="803.9" font-size="12" fill="#999">cfg</text>
<text x="1334" y="803.9" font-size="12" fill="#DDD" text-anchor="end">3.0</text>
<circle cx="1124.2" cy="823.9" r="3.6" fill="rgba(0,128,0,0.12)" stroke="#0a0a0a" stroke-width="1.05"/>
<rect x="1129.2" y="813.9" width="239.8" height="20" rx="10" fill="#222" stroke="#666" stroke-width="1"/>
<path d="M1145.2 818.9L1135.2 823.9L1145.2 828.9Z" fill="#666"/>
<path d="M1353 818.9L1363 823.9L1353 828.9Z" fill="#DDD"/>
<text x="1149.2" y="827.9" font-size="12" fill="#999">sampler_name</text>
<text x="1334" y="827.9" font-size="12" fill="#DDD" text-anchor="end">euler</text>
<circle cx="1124.2" cy="847.9" r="3.6" fill="rgba(0,128,0,0.12)" stroke="#0a0a0a" stroke-width="1.05"/>
<rect x="1129.2" y="837.9" width="239.8" height="20" rx="10" fill="#222" stroke="#666" stroke-width="1"/>
<path d="M1145.2 842.9L1135.2 847.9L1145.2 852.9Z" fill="#666"/>
<path d="M1353 842.9L1363 847.9L1353 852.9Z" fill="#DDD"/>
<text x="1149.2" y="851.9" font-size="12" fill="#999">scheduler</text>
<text x="1334" y="851.9" font-size="12" fill="#DDD" text-anchor="end">simple</text>
<circle cx="1124.2" cy="871.9" r="3.6" fill="rgba(0,128,0,0.12)" stroke="#0a0a0a" stroke-width="1.05"/>
<rect x="1129.2" y="861.9" width="239.8" height="20" rx="10" fill="#222" stroke="#666" stroke-width="1"/>
<path d="M1145.2 866.9L1135.2 871.9L1145.2 876.9Z" fill="#DDD"/>
<path d="M1353 866.9L1363 871.9L1353 876.9Z" fill="#DDD"/>
<text x="1149.2" y="875.9" font-size="12" fill="#999">denoise</text>
<text x="1334" y="875.9" font-size="12" fill="#DDD" text-anchor="end">0.10</text>
<rect x="1391" y="601.4" width="51" height="25.8" rx="5" fill="#303030"/>
<text x="1398.5" y="614.9" font-size="12" fill="#999">5.373s</text>
<rect x="1549.7" y="599" width="50.3" height="19.6" rx="5" fill="#0f1c10"/>
<text x="1556.7" y="614.6" font-size="12" fill="#fff" font-weight="bold">[BE</text>
<rect x="1573.7" y="601" width="26.3" height="19.6" rx="5" fill="#0f1c10"/>
<text x="1586.8" y="614.6" font-size="12" fill="#fff" text-anchor="middle" font-weight="bold">#2</text>
<rect x="1392.5" y="623.2" width="210.3" height="179" rx="0" fill="rgba(0,0,0,0.5)" filter="url(#sh)"/>
<rect x="1390.5" y="621.2" width="210.3" height="179" rx="0" fill="#353535"/>
<rect x="1390.5" y="621.2" width="210.3" height="30" fill="#2f2f2f"/>
<rect x="1400.5" y="631.3" width="10" height="10" fill="#666"/>
<rect x="1390.5" y="651.2" width="210.3" height="1" fill="rgba(0,0,0,0.18)"/>
<text x="1420.5" y="641.2" font-size="14" fill="#999">VAE Decode (Tiled)</text>
<circle cx="1400.5" cy="665.2" r="4" fill="#FF9CF9"/>
<text x="1410.5" y="669.7" font-size="12" fill="#AAA">samples</text>
<circle cx="1400.5" cy="685.2" r="4" fill="#FF6E6E"/>
<text x="1410.5" y="689.7" font-size="12" fill="#AAA">vae</text>
<circle cx="1591.8" cy="665.2" r="4.3" fill="#64B5F6" stroke="#000" stroke-width="1.3"/>
<text x="1580.8" y="669.7" font-size="12" fill="#AAA" text-anchor="end">IMAGE</text>
<rect x="1405.5" y="697.2" width="180.3" height="20" rx="10" fill="#222" stroke="#666" stroke-width="1"/>
<path d="M1421.5 702.2L1411.5 707.2L1421.5 712.2Z" fill="#DDD"/>
<path d="M1569.8 702.2L1579.8 707.2L1569.8 712.2Z" fill="#DDD"/>
<text x="1425.5" y="711.2" font-size="12" fill="#999">tile_size</text>
<text x="1550.8" y="711.2" font-size="12" fill="#DDD" text-anchor="end">512</text>
<rect x="1405.5" y="721.2" width="180.3" height="20" rx="10" fill="#222" stroke="#666" stroke-width="1"/>
<path d="M1421.5 726.2L1411.5 731.2L1421.5 736.2Z" fill="#DDD"/>
<path d="M1569.8 726.2L1579.8 731.2L1569.8 736.2Z" fill="#DDD"/>
<text x="1425.5" y="735.2" font-size="12" fill="#999">overlap</text>
<text x="1550.8" y="735.2" font-size="12" fill="#DDD" text-anchor="end">64</text>
<rect x="1405.5" y="745.2" width="180.3" height="20" rx="10" fill="#222" stroke="#666" stroke-width="1"/>
<path d="M1421.5 750.2L1411.5 755.2L1421.5 760.2Z" fill="#DDD"/>
<path d="M1569.8 750.2L1579.8 755.2L1569.8 760.2Z" fill="#DDD"/>
<text x="1425.5" y="759.2" font-size="12" fill="#999">temporal_size</text>
<text x="1550.8" y="759.2" font-size="12" fill="#DDD" text-anchor="end">32</text>
<rect x="1405.5" y="769.2" width="180.3" height="20" rx="10" fill="#222" stroke="#666" stroke-width="1"/>
<path d="M1421.5 774.2L1411.5 779.2L1421.5 784.2Z" fill="#DDD"/>
<path d="M1569.8 774.2L1579.8 779.2L1569.8 784.2Z" fill="#DDD"/>
<text x="1425.5" y="783.2" font-size="12" fill="#999">temporal_overlap</text>
<text x="1550.8" y="783.2" font-size="12" fill="#DDD" text-anchor="end">8</text>
<rect x="1638" y="594.3" width="51.3" height="25.8" rx="5" fill="#303030"/>
<text x="1645.5" y="607.8" font-size="12" fill="#999">0.028s</text>
<rect x="1820" y="594.3" width="26.8" height="19.4" rx="5" fill="#0f1c10"/>
<text x="1833.4" y="607.6" font-size="12" fill="#fff" text-anchor="middle" font-weight="bold">#1</text>
<rect x="1639.4" y="616.1" width="209.8" height="136.5" rx="0" fill="rgba(0,0,0,0.5)" filter="url(#sh)"/>
<rect x="1637.4" y="614.1" width="209.8" height="136.5" rx="0" fill="#353535"/>
<rect x="1637.4" y="614.1" width="209.8" height="30" fill="#2f2f2f"/>
<rect x="1647.4" y="624.2" width="10" height="10" fill="#666"/>
<rect x="1637.4" y="644.1" width="209.8" height="1" fill="rgba(0,0,0,0.18)"/>
<text x="1667.4" y="634.1" font-size="14" fill="#999">Image Sharpen</text>
<circle cx="1647.4" cy="658.1" r="4" fill="#64B5F6"/>
<text x="1657.4" y="662.6" font-size="12" fill="#AAA">image</text>
<circle cx="1838.2" cy="658.1" r="4.3" fill="#64B5F6" stroke="#000" stroke-width="1.3"/>
<text x="1827.2" y="662.6" font-size="12" fill="#AAA" text-anchor="end">IMAGE</text>
<rect x="1652.4" y="670.1" width="179.8" height="20" rx="10" fill="#222" stroke="#666" stroke-width="1"/>
<path d="M1668.4 675.1L1658.4 680.1L1668.4 685.1Z" fill="#666"/>
<path d="M1816.2 675.1L1826.2 680.1L1816.2 685.1Z" fill="#DDD"/>
<text x="1672.4" y="684.1" font-size="12" fill="#999">sharpen_radius</text>
<text x="1797.2" y="684.1" font-size="12" fill="#DDD" text-anchor="end">1</text>
<rect x="1652.4" y="694.1" width="179.8" height="20" rx="10" fill="#222" stroke="#666" stroke-width="1"/>
<path d="M1668.4 699.1L1658.4 704.1L1668.4 709.1Z" fill="#DDD"/>
<path d="M1816.2 699.1L1826.2 704.1L1816.2 709.1Z" fill="#DDD"/>
<text x="1672.4" y="708.1" font-size="12" fill="#999">sigma</text>
<text x="1797.2" y="708.1" font-size="12" fill="#DDD" text-anchor="end">1.00</text>
<rect x="1652.4" y="718.1" width="179.8" height="20" rx="10" fill="#222" stroke="#666" stroke-width="1"/>
<path d="M1668.4 723.1L1658.4 728.1L1668.4 733.1Z" fill="#DDD"/>
<path d="M1816.2 723.1L1826.2 728.1L1816.2 733.1Z" fill="#DDD"/>
<text x="1672.4" y="732.1" font-size="12" fill="#999">alpha</text>
<text x="1797.2" y="732.1" font-size="12" fill="#DDD" text-anchor="end">0.10</text>
<rect x="1553.8" y="50.5" width="33.8" height="18.8" rx="5" fill="#0f1c10"/>
<text x="1570.7" y="63.5" font-size="12" fill="#fff" text-anchor="middle" font-weight="bold">#15</text>
<rect x="1274.9" y="72" width="314.7" height="343.8" rx="0" fill="rgba(0,0,0,0.5)" filter="url(#sh)"/>
<rect x="1272.9" y="70" width="314.7" height="343.8" rx="0" fill="#353535"/>
<rect x="1272.9" y="70" width="314.7" height="30" fill="#2f2f2f"/>
<rect x="1282.9" y="80.1" width="10" height="10" fill="#666"/>
<rect x="1272.9" y="100" width="314.7" height="1" fill="rgba(0,0,0,0.18)"/>
<text x="1302.9" y="90" font-size="14" fill="#999">Load Image</text>
<circle cx="1578.6" cy="114" r="4.3" fill="#64B5F6" stroke="#000" stroke-width="1.3"/>
<text x="1567.6" y="118.5" font-size="12" fill="#AAA" text-anchor="end">IMAGE</text>
<circle cx="1578.6" cy="134" r="4.3" fill="#81C784" stroke="#000" stroke-width="1.3"/>
<text x="1567.6" y="138.5" font-size="12" fill="#AAA" text-anchor="end">MASK</text>
<rect x="1287.9" y="146" width="284.7" height="20" rx="10" fill="#222" stroke="#666" stroke-width="1"/>
<path d="M1303.9 151L1293.9 156L1303.9 161Z" fill="#DDD"/>
<path d="M1556.6 151L1566.6 156L1556.6 161Z" fill="#DDD"/>
<text x="1307.9" y="160" font-size="12" fill="#999">image</text>
<text x="1537.6" y="160" font-size="12" fill="#DDD" text-anchor="end">input1 (1).png</text>
<rect x="1287.9" y="170" width="284.7" height="20" fill="#222" stroke="#666" stroke-width="1"/>
<text x="1430.2" y="184" font-size="12" fill="#DDD" text-anchor="middle">choose file to upload</text>
<use href="#pt" x="1361.8" y="193.9" width="137" height="205.3"/>
<text x="1430.2" y="409.2" font-size="10" fill="#AAA" text-anchor="middle">512 <tspan font-size="13.5" dy="0.6">×</tspan><tspan dy="-0.6"> 768</tspan></text>
<rect x="1604.4" y="89.8" width="51.2" height="25.2" rx="5" fill="#303030"/>
<text x="1611.9" y="103" font-size="12" fill="#999">0.184s</text>
<rect x="1844.9" y="89.8" width="34.1" height="18.9" rx="5" fill="#0f1c10"/>
<text x="1862" y="102.8" font-size="12" fill="#fff" text-anchor="middle" font-weight="bold">#11</text>
<rect x="1606.4" y="111" width="274.6" height="299.4" rx="0" fill="rgba(0,0,0,0.5)" filter="url(#sh)"/>
<rect x="1604.4" y="109" width="274.6" height="299.4" rx="0" fill="#353535"/>
<rect x="1604.4" y="109" width="274.6" height="30" fill="#2f2f2f"/>
<rect x="1614.4" y="119.1" width="10" height="10" fill="#666"/>
<rect x="1604.4" y="139" width="274.6" height="1" fill="rgba(0,0,0,0.18)"/>
<text x="1634.4" y="129" font-size="14" fill="#999">Ksampler Upscale</text>
<circle cx="1614.4" cy="153" r="4" fill="#64B5F6"/>
<text x="1624.4" y="157.5" font-size="12" fill="#AAA">images</text>
<rect x="1619.4" y="165" width="244.6" height="20" rx="10" fill="#222" stroke="#666" stroke-width="1"/>
<text x="1634.4" y="179" font-size="12" fill="#999">filename_prefix</text>
<text x="1849" y="179" font-size="12" fill="#DDD" text-anchor="end">ksampler_upscale</text>
<use href="#pt" x="1673" y="189.2" width="136.7" height="204.6"/>
<text x="1741.7" y="403.6" font-size="10" fill="#AAA" text-anchor="middle">1024 <tspan font-size="13.5" dy="0.6">×</tspan><tspan dy="-0.6"> 1536</tspan></text>
<rect x="1900.2" y="83.5" width="52.1" height="24.6" rx="5" fill="#303030"/>
<text x="1907.7" y="96.4" font-size="12" fill="#999">0.151s</text>
<rect x="2083" y="82.8" width="27.6" height="18.3" rx="5" fill="#0f1c10"/>
<text x="2096.8" y="95.5" font-size="12" fill="#fff" text-anchor="middle" font-weight="bold">#4</text>
<rect x="1902.2" y="104.1" width="210.4" height="312.1" rx="0" fill="rgba(0,0,0,0.5)" filter="url(#sh)"/>
<rect x="1900.2" y="102.1" width="210.4" height="312.1" rx="0" fill="#353535"/>
<rect x="1900.2" y="102.1" width="210.4" height="30" fill="#2f2f2f"/>
<rect x="1910.2" y="112.2" width="10" height="10" fill="#666"/>
<rect x="1900.2" y="132.1" width="210.4" height="1" fill="rgba(0,0,0,0.18)"/>
<text x="1930.2" y="122.1" font-size="14" fill="#999">Ksampler Upscale Sh...</text>
<circle cx="1910.2" cy="146.1" r="4" fill="#64B5F6"/>
<text x="1920.2" y="150.6" font-size="12" fill="#AAA">images</text>
<rect x="1915.2" y="158.1" width="180.4" height="20" rx="10" fill="#222" stroke="#666" stroke-width="1"/>
<text x="1930.2" y="172.1" font-size="12" fill="#999">filename  ...</text>
<text x="2080.6" y="172.1" font-size="12" fill="#DDD" text-anchor="end">ksampler_sharp</text>
<use href="#pt" x="1933" y="182" width="145" height="216.8"/>
<text x="2005.4" y="409.2" font-size="10" fill="#AAA" text-anchor="middle">1024 <tspan font-size="13.5" dy="0.6">×</tspan><tspan dy="-0.6"> 1536</tspan></text>
<rect x="2355" y="83" width="49.4" height="25.3" rx="5" fill="#303030"/>
<text x="2362.5" y="96.2" font-size="12" fill="#999">0.735s</text>
<rect x="2554.6" y="83" width="28" height="19" rx="5" fill="#0f1c10"/>
<text x="2568.6" y="96.1" font-size="12" fill="#fff" text-anchor="middle" font-weight="bold">#7</text>
<rect x="2356" y="104.3" width="228.7" height="300.1" rx="0" fill="rgba(0,0,0,0.5)" filter="url(#sh)"/>
<rect x="2354" y="102.3" width="228.7" height="300.1" rx="0" fill="#353535"/>
<rect x="2354" y="102.3" width="228.7" height="30" fill="#2f2f2f"/>
<rect x="2364" y="112.4" width="10" height="10" fill="#666"/>
<rect x="2354" y="132.3" width="228.7" height="1" fill="rgba(0,0,0,0.18)"/>
<text x="2384" y="122.3" font-size="14" fill="#999">Ultimate SD Upscale Sh...</text>
<circle cx="2364" cy="146.3" r="4" fill="#64B5F6"/>
<text x="2374" y="150.8" font-size="12" fill="#AAA">images</text>
<rect x="2369" y="158.3" width="198.7" height="20" rx="10" fill="#222" stroke="#666" stroke-width="1"/>
<text x="2384" y="172.3" font-size="12" fill="#999">filename_p ...</text>
<text x="2552.7" y="172.3" font-size="12" fill="#DDD" text-anchor="end">ultimate-sd-sharp</text>
<use href="#pt" x="2398.8" y="183.1" width="137" height="204.4"/>
<text x="2468.3" y="398" font-size="10" fill="#AAA" text-anchor="middle">2048 <tspan font-size="13.5" dy="0.6">×</tspan><tspan dy="-0.6"> 3072</tspan></text>
<rect x="2119.6" y="87.7" width="51" height="25.3" rx="5" fill="#303030"/>
<text x="2127.1" y="100.9" font-size="12" fill="#999">0.637s</text>
<rect x="2332" y="87.7" width="28" height="18.6" rx="5" fill="#0f1c10"/>
<text x="2346" y="100.6" font-size="12" fill="#fff" text-anchor="middle" font-weight="bold">#6</text>
<rect x="2121.6" y="109" width="240.4" height="299.5" rx="0" fill="rgba(0,0,0,0.5)" filter="url(#sh)"/>
<rect x="2119.6" y="107" width="240.4" height="299.5" rx="0" fill="#353535"/>
<rect x="2119.6" y="107" width="240.4" height="30" fill="#2f2f2f"/>
<rect x="2129.6" y="117.1" width="10" height="10" fill="#666"/>
<rect x="2119.6" y="137" width="240.4" height="1" fill="rgba(0,0,0,0.18)"/>
<text x="2149.6" y="127" font-size="14" fill="#999">Ultimate SD Upscale</text>
<circle cx="2129.6" cy="151" r="4" fill="#64B5F6"/>
<text x="2139.6" y="155.5" font-size="12" fill="#AAA">images</text>
<rect x="2134.6" y="163" width="210.4" height="20" rx="10" fill="#222" stroke="#666" stroke-width="1"/>
<text x="2149.6" y="177" font-size="12" fill="#999">filename_prefix</text>
<text x="2330" y="177" font-size="12" fill="#DDD" text-anchor="end">ultimate-sd</text>
<use href="#pt" x="2172" y="186.9" width="135.7" height="204.9"/>
<text x="2239.8" y="401.8" font-size="10" fill="#AAA" text-anchor="middle">2048 <tspan font-size="13.5" dy="0.6">×</tspan><tspan dy="-0.6"> 3072</tspan></text>
<rect x="2593.2" y="80.5" width="51.2" height="25.8" rx="5" fill="#303030"/>
<text x="2600.7" y="94" font-size="12" fill="#999">0.987s</text>
<rect x="2846.8" y="80.5" width="34.6" height="19.1" rx="5" fill="#0f1c10"/>
<text x="2864.1" y="93.6" font-size="12" fill="#fff" text-anchor="middle" font-weight="bold">#14</text>
<rect x="2595.2" y="102.3" width="288.2" height="311.3" rx="0" fill="rgba(0,0,0,0.5)" filter="url(#sh)"/>
<rect x="2593.2" y="100.3" width="288.2" height="311.3" rx="0" fill="#353535"/>
<rect x="2593.2" y="100.3" width="288.2" height="30" fill="#2f2f2f"/>
<rect x="2603.2" y="110.4" width="10" height="10" fill="#666"/>
<rect x="2593.2" y="130.3" width="288.2" height="1" fill="rgba(0,0,0,0.18)"/>
<text x="2623.2" y="120.3" font-size="14" fill="#999">Ultimate SD Upscale GFPGAN</text>
<circle cx="2603.2" cy="144.3" r="4" fill="#64B5F6"/>
<text x="2613.2" y="148.8" font-size="12" fill="#AAA">images</text>
<rect x="2608.2" y="156.3" width="258.2" height="20" rx="10" fill="#222" stroke="#666" stroke-width="1"/>
<text x="2623.2" y="170.3" font-size="12" fill="#999">filename_ ...</text>
<text x="2851.4" y="170.3" font-size="12" fill="#DDD" text-anchor="end">ultimate-sd-sharp-codeformer</text>
<use href="#pt" x="2664.9" y="179.8" width="144.6" height="216.9"/>
<text x="2737.3" y="406.9" font-size="10" fill="#AAA" text-anchor="middle">2048 <tspan font-size="13.5" dy="0.6">×</tspan><tspan dy="-0.6"> 3072</tspan></text>
<rect x="2103.6" y="707" width="27.9" height="19.4" rx="5" fill="#0f1c10"/>
<text x="2117.6" y="720.3" font-size="12" fill="#fff" text-anchor="middle" font-weight="bold">#5</text>
<rect x="1923.6" y="729.5" width="209.9" height="86.8" rx="8" fill="rgba(0,0,0,0.5)" filter="url(#sh)"/>
<rect x="1921.6" y="727.5" width="209.9" height="86.8" rx="8" fill="#353535"/>
<path d="M1921.6 757.5V735.5A8 8 0 0 1 1929.6 727.5H2123.5A8 8 0 0 1 2131.5 735.5V757.5Z" fill="#2f2f2f"/>
<circle cx="1936.6" cy="742.4" r="5" fill="#666"/>
<rect x="1921.6" y="757.5" width="209.9" height="1" fill="rgba(0,0,0,0.18)"/>
<text x="1951.6" y="747.5" font-size="14" fill="#999">Load Upscale Model</text>
<circle cx="2122.5" cy="771.5" r="4.3" fill="#7F7" stroke="#000" stroke-width="1.3"/>
<text x="2111.5" y="776" font-size="12" fill="#AAA" text-anchor="end">UPSCALE_MODEL</text>
<circle cx="1931.6" cy="793.5" r="3.6" fill="rgba(0,128,0,0.12)" stroke="#0a0a0a" stroke-width="1.05"/>
<rect x="1936.6" y="783.5" width="179.9" height="20" rx="10" fill="#222" stroke="#666" stroke-width="1"/>
<path d="M1952.6 788.5L1942.6 793.5L1952.6 798.5Z" fill="#DDD"/>
<path d="M2100.5 788.5L2110.5 793.5L2100.5 798.5Z" fill="#DDD"/>
<text x="1956.6" y="797.5" font-size="12" fill="#999">mo...</text>
<text x="2081.5" y="797.5" font-size="12" fill="#DDD" text-anchor="end">4x-UltraSharp.pth</text>
<rect x="2159.4" y="545" width="65.8" height="25" rx="5" fill="#303030"/>
<text x="2166.9" y="558.1" font-size="12" fill="#999">118.953s</text>
<rect x="2305.4" y="542.4" width="168.2" height="19.8" rx="5" fill="#0f1c10"/>
<text x="2312.4" y="558.1" font-size="12" fill="#fff" font-weight="bold">comfyui_ultimatesdup:</text>
<rect x="2440.2" y="544.4" width="33.4" height="19.8" rx="5" fill="#0f1c10"/>
<text x="2456.9" y="558.1" font-size="12" fill="#fff" text-anchor="middle" font-weight="bold">#10</text>
<rect x="2161.4" y="566.4" width="314.7" height="643.8" rx="0" fill="rgba(0,0,0,0.5)" filter="url(#sh)"/>
<rect x="2159.4" y="564.4" width="314.7" height="643.8" rx="0" fill="#353535"/>
<rect x="2159.4" y="564.4" width="314.7" height="30" fill="#2f2f2f"/>
<rect x="2169.4" y="574.5" width="10" height="10" fill="#666"/>
<rect x="2159.4" y="594.4" width="314.7" height="1" fill="rgba(0,0,0,0.18)"/>
<text x="2189.4" y="584.4" font-size="14" fill="#999">Ultimate SD Upscale</text>
<circle cx="2169.4" cy="608.4" r="4" fill="#64B5F6"/>
<text x="2179.4" y="612.9" font-size="12" fill="#AAA">image</text>
<circle cx="2169.4" cy="628.4" r="4" fill="#B39DDB"/>
<text x="2179.4" y="632.9" font-size="12" fill="#AAA">model</text>
<circle cx="2169.4" cy="648.4" r="4" fill="#FFA931"/>
<text x="2179.4" y="652.9" font-size="12" fill="#AAA">positive</text>
<circle cx="2169.4" cy="668.4" r="4" fill="#FFA931"/>
<text x="2179.4" y="672.9" font-size="12" fill="#AAA">negative</text>
<circle cx="2169.4" cy="688.4" r="4" fill="#FF6E6E"/>
<text x="2179.4" y="692.9" font-size="12" fill="#AAA">vae</text>
<circle cx="2169.4" cy="708.4" r="4" fill="#7F7"/>
<text x="2179.4" y="712.9" font-size="12" fill="#AAA">upscale_model</text>
<circle cx="2465.1" cy="608.4" r="4.3" fill="#64B5F6" stroke="#000" stroke-width="1.3"/>
<text x="2454.1" y="612.9" font-size="12" fill="#AAA" text-anchor="end">IMAGE</text>
<rect x="2174.4" y="720.4" width="284.7" height="20" rx="10" fill="#222" stroke="#666" stroke-width="1"/>
<path d="M2190.4 725.4L2180.4 730.4L2190.4 735.4Z" fill="#DDD"/>
<path d="M2443.1 725.4L2453.1 730.4L2443.1 735.4Z" fill="#DDD"/>
<text x="2194.4" y="734.4" font-size="12" fill="#999">upscale_by</text>
<text x="2424.1" y="734.4" font-size="12" fill="#DDD" text-anchor="end">2.00</text>
<circle cx="2169.4" cy="754.4" r="3.6" fill="rgba(0,128,0,0.12)" stroke="#0a0a0a" stroke-width="1.05"/>
<rect x="2174.4" y="744.4" width="284.7" height="20" rx="10" fill="#222" stroke="#666" stroke-width="1"/>
<path d="M2190.4 749.4L2180.4 754.4L2190.4 759.4Z" fill="#DDD"/>
<path d="M2443.1 749.4L2453.1 754.4L2443.1 759.4Z" fill="#DDD"/>
<text x="2194.4" y="758.4" font-size="12" fill="#999">seed</text>
<text x="2424.1" y="758.4" font-size="12" fill="#DDD" text-anchor="end">52023845889947</text>
<rect x="2174.4" y="768.4" width="284.7" height="20" rx="10" fill="#222" stroke="#666" stroke-width="1"/>
<path d="M2190.4 773.4L2180.4 778.4L2190.4 783.4Z" fill="#DDD"/>
<path d="M2443.1 773.4L2453.1 778.4L2443.1 783.4Z" fill="#666"/>
<text x="2194.4" y="782.4" font-size="12" fill="#999">control after generate</text>
<text x="2424.1" y="782.4" font-size="12" fill="#DDD" text-anchor="end">randomize</text>
<rect x="2174.4" y="792.4" width="284.7" height="20" rx="10" fill="#222" stroke="#666" stroke-width="1"/>
<path d="M2190.4 797.4L2180.4 802.4L2190.4 807.4Z" fill="#DDD"/>
<path d="M2443.1 797.4L2453.1 802.4L2443.1 807.4Z" fill="#DDD"/>
<text x="2194.4" y="806.4" font-size="12" fill="#999">steps</text>
<text x="2424.1" y="806.4" font-size="12" fill="#DDD" text-anchor="end">10</text>
<rect x="2174.4" y="816.4" width="284.7" height="20" rx="10" fill="#222" stroke="#666" stroke-width="1"/>
<path d="M2190.4 821.4L2180.4 826.4L2190.4 831.4Z" fill="#DDD"/>
<path d="M2443.1 821.4L2453.1 826.4L2443.1 831.4Z" fill="#DDD"/>
<text x="2194.4" y="830.4" font-size="12" fill="#999">cfg</text>
<text x="2424.1" y="830.4" font-size="12" fill="#DDD" text-anchor="end">3.5</text>
<rect x="2174.4" y="840.4" width="284.7" height="20" rx="10" fill="#222" stroke="#666" stroke-width="1"/>
<path d="M2190.4 845.4L2180.4 850.4L2190.4 855.4Z" fill="#666"/>
<path d="M2443.1 845.4L2453.1 850.4L2443.1 855.4Z" fill="#DDD"/>
<text x="2194.4" y="854.4" font-size="12" fill="#999">sampler_name</text>
<text x="2424.1" y="854.4" font-size="12" fill="#DDD" text-anchor="end">euler</text>
<rect x="2174.4" y="864.4" width="284.7" height="20" rx="10" fill="#222" stroke="#666" stroke-width="1"/>
<path d="M2190.4 869.4L2180.4 874.4L2190.4 879.4Z" fill="#DDD"/>
<path d="M2443.1 869.4L2453.1 874.4L2443.1 879.4Z" fill="#DDD"/>
<text x="2194.4" y="878.4" font-size="12" fill="#999">scheduler</text>
<text x="2424.1" y="878.4" font-size="12" fill="#DDD" text-anchor="end">normal</text>
<rect x="2174.4" y="888.4" width="284.7" height="20" rx="10" fill="#222" stroke="#666" stroke-width="1"/>
<path d="M2190.4 893.4L2180.4 898.4L2190.4 903.4Z" fill="#DDD"/>
<path d="M2443.1 893.4L2453.1 898.4L2443.1 903.4Z" fill="#DDD"/>
<text x="2194.4" y="902.4" font-size="12" fill="#999">denoise</text>
<text x="2424.1" y="902.4" font-size="12" fill="#DDD" text-anchor="end">0.15</text>
<rect x="2174.4" y="912.4" width="284.7" height="20" rx="10" fill="#222" stroke="#666" stroke-width="1"/>
<path d="M2190.4 917.4L2180.4 922.4L2190.4 927.4Z" fill="#666"/>
<path d="M2443.1 917.4L2453.1 922.4L2443.1 927.4Z" fill="#DDD"/>
<text x="2194.4" y="926.4" font-size="12" fill="#999">mode_type</text>
<text x="2424.1" y="926.4" font-size="12" fill="#DDD" text-anchor="end">Linear</text>
<rect x="2174.4" y="936.4" width="284.7" height="20" rx="10" fill="#222" stroke="#666" stroke-width="1"/>
<path d="M2190.4 941.4L2180.4 946.4L2190.4 951.4Z" fill="#DDD"/>
<path d="M2443.1 941.4L2453.1 946.4L2443.1 951.4Z" fill="#DDD"/>
<text x="2194.4" y="950.4" font-size="12" fill="#999">tile_width</text>
<text x="2424.1" y="950.4" font-size="12" fill="#DDD" text-anchor="end">1024</text>
<rect x="2174.4" y="960.4" width="284.7" height="20" rx="10" fill="#222" stroke="#666" stroke-width="1"/>
<path d="M2190.4 965.4L2180.4 970.4L2190.4 975.4Z" fill="#DDD"/>
<path d="M2443.1 965.4L2453.1 970.4L2443.1 975.4Z" fill="#DDD"/>
<text x="2194.4" y="974.4" font-size="12" fill="#999">tile_height</text>
<text x="2424.1" y="974.4" font-size="12" fill="#DDD" text-anchor="end">1024</text>
<rect x="2174.4" y="984.4" width="284.7" height="20" rx="10" fill="#222" stroke="#666" stroke-width="1"/>
<path d="M2190.4 989.4L2180.4 994.4L2190.4 999.4Z" fill="#DDD"/>
<path d="M2443.1 989.4L2453.1 994.4L2443.1 999.4Z" fill="#DDD"/>
<text x="2194.4" y="998.4" font-size="12" fill="#999">mask_blur</text>
<text x="2424.1" y="998.4" font-size="12" fill="#DDD" text-anchor="end">12</text>
<rect x="2174.4" y="1008.4" width="284.7" height="20" rx="10" fill="#222" stroke="#666" stroke-width="1"/>
<path d="M2190.4 1013.4L2180.4 1018.4L2190.4 1023.4Z" fill="#DDD"/>
<path d="M2443.1 1013.4L2453.1 1018.4L2443.1 1023.4Z" fill="#DDD"/>
<text x="2194.4" y="1022.4" font-size="12" fill="#999">tile_padding</text>
<text x="2424.1" y="1022.4" font-size="12" fill="#DDD" text-anchor="end">64</text>
<rect x="2174.4" y="1032.4" width="284.7" height="20" rx="10" fill="#222" stroke="#666" stroke-width="1"/>
<path d="M2190.4 1037.4L2180.4 1042.4L2190.4 1047.4Z" fill="#666"/>
<path d="M2443.1 1037.4L2453.1 1042.4L2443.1 1047.4Z" fill="#DDD"/>
<text x="2194.4" y="1046.4" font-size="12" fill="#999">seam_fix_mode</text>
<text x="2424.1" y="1046.4" font-size="12" fill="#DDD" text-anchor="end">None</text>
<rect x="2174.4" y="1056.4" width="284.7" height="20" rx="10" fill="#222" stroke="#666" stroke-width="1"/>
<path d="M2190.4 1061.4L2180.4 1066.4L2190.4 1071.4Z" fill="#DDD"/>
<path d="M2443.1 1061.4L2453.1 1066.4L2443.1 1071.4Z" fill="#DDD"/>
<text x="2194.4" y="1070.4" font-size="12" fill="#999">seam_fix_denoise</text>
<text x="2424.1" y="1070.4" font-size="12" fill="#DDD" text-anchor="end">0.30</text>
<rect x="2174.4" y="1080.4" width="284.7" height="20" rx="10" fill="#222" stroke="#666" stroke-width="1"/>
<path d="M2190.4 1085.4L2180.4 1090.4L2190.4 1095.4Z" fill="#DDD"/>
<path d="M2443.1 1085.4L2453.1 1090.4L2443.1 1095.4Z" fill="#DDD"/>
<text x="2194.4" y="1094.4" font-size="12" fill="#999">seam_fix_width</text>
<text x="2424.1" y="1094.4" font-size="12" fill="#DDD" text-anchor="end">192</text>
<rect x="2174.4" y="1104.4" width="284.7" height="20" rx="10" fill="#222" stroke="#666" stroke-width="1"/>
<path d="M2190.4 1109.4L2180.4 1114.4L2190.4 1119.4Z" fill="#DDD"/>
<path d="M2443.1 1109.4L2453.1 1114.4L2443.1 1119.4Z" fill="#DDD"/>
<text x="2194.4" y="1118.4" font-size="12" fill="#999">seam_fix_mask_blur</text>
<text x="2424.1" y="1118.4" font-size="12" fill="#DDD" text-anchor="end">32</text>
<rect x="2174.4" y="1128.4" width="284.7" height="20" rx="10" fill="#222" stroke="#666" stroke-width="1"/>
<path d="M2190.4 1133.4L2180.4 1138.4L2190.4 1143.4Z" fill="#DDD"/>
<path d="M2443.1 1133.4L2453.1 1138.4L2443.1 1143.4Z" fill="#DDD"/>
<text x="2194.4" y="1142.4" font-size="12" fill="#999">seam_fix_padding</text>
<text x="2424.1" y="1142.4" font-size="12" fill="#DDD" text-anchor="end">64</text>
<rect x="2174.4" y="1152.4" width="284.7" height="20" rx="10" fill="#222" stroke="#666" stroke-width="1"/>
<text x="2189.4" y="1166.4" font-size="12" fill="#999">force_uniform_tiles</text>
<text x="2434.1" y="1166.4" font-size="12" fill="#DDD" text-anchor="end">true</text>
<circle cx="2444.1" cy="1162.4" r="7.2" fill="#89A"/>
<rect x="2174.4" y="1176.4" width="284.7" height="20" rx="10" fill="#222" stroke="#666" stroke-width="1"/>
<text x="2189.4" y="1190.4" font-size="12" fill="#999">tiled_decode</text>
<text x="2434.1" y="1190.4" font-size="12" fill="#999" text-anchor="end">false</text>
<circle cx="2444.1" cy="1186.4" r="7.2" fill="#333"/>
<rect x="2502" y="559.7" width="51.4" height="25.3" rx="5" fill="#303030"/>
<text x="2509.5" y="573" font-size="12" fill="#999">0.076s</text>
<rect x="2680.8" y="559.7" width="34.6" height="19.1" rx="5" fill="#0f1c10"/>
<text x="2698.1" y="572.9" font-size="12" fill="#fff" text-anchor="middle" font-weight="bold">#20</text>
<rect x="2504" y="581.4" width="214" height="135.9" rx="0" fill="rgba(0,0,0,0.5)" filter="url(#sh)"/>
<rect x="2502" y="579.4" width="214" height="135.9" rx="0" fill="#353535"/>
<rect x="2502" y="579.4" width="214" height="30" fill="#2f2f2f"/>
<rect x="2512" y="589.5" width="10" height="10" fill="#666"/>
<rect x="2502" y="609.4" width="214" height="1" fill="rgba(0,0,0,0.18)"/>
<text x="2532" y="599.4" font-size="14" fill="#999">Image Sharpen</text>
<circle cx="2512" cy="623.4" r="4" fill="#64B5F6"/>
<text x="2522" y="627.9" font-size="12" fill="#AAA">image</text>
<circle cx="2707" cy="623.4" r="4.3" fill="#64B5F6" stroke="#000" stroke-width="1.3"/>
<text x="2696" y="627.9" font-size="12" fill="#AAA" text-anchor="end">IMAGE</text>
<rect x="2517" y="635.4" width="184" height="20" rx="10" fill="#222" stroke="#666" stroke-width="1"/>
<path d="M2533 640.4L2523 645.4L2533 650.4Z" fill="#666"/>
<path d="M2685 640.4L2695 645.4L2685 650.4Z" fill="#DDD"/>
<text x="2537" y="649.4" font-size="12" fill="#999">sharpen_radius</text>
<text x="2666" y="649.4" font-size="12" fill="#DDD" text-anchor="end">1</text>
<rect x="2517" y="659.4" width="184" height="20" rx="10" fill="#222" stroke="#666" stroke-width="1"/>
<path d="M2533 664.4L2523 669.4L2533 674.4Z" fill="#DDD"/>
<path d="M2685 664.4L2695 669.4L2685 674.4Z" fill="#DDD"/>
<text x="2537" y="673.4" font-size="12" fill="#999">sigma</text>
<text x="2666" y="673.4" font-size="12" fill="#DDD" text-anchor="end">1.00</text>
<rect x="2517" y="683.4" width="184" height="20" rx="10" fill="#222" stroke="#666" stroke-width="1"/>
<path d="M2533 688.4L2523 693.4L2533 698.4Z" fill="#DDD"/>
<path d="M2685 688.4L2695 693.4L2685 698.4Z" fill="#DDD"/>
<text x="2537" y="697.4" font-size="12" fill="#999">alpha</text>
<text x="2666" y="697.4" font-size="12" fill="#DDD" text-anchor="end">0.10</text>
<rect x="2620.9" y="734.4" width="92.1" height="20" rx="5" fill="#0f1c10"/>
<text x="2627.9" y="750.2" font-size="12" fill="#fff" font-weight="bold">facerestor</text>
<rect x="2680.5" y="736.4" width="32.5" height="20" rx="5" fill="#0f1c10"/>
<text x="2696.8" y="750.2" font-size="12" fill="#fff" text-anchor="middle" font-weight="bold">#19</text>
<rect x="2505.5" y="758.7" width="209.5" height="87.2" rx="0" fill="rgba(0,0,0,0.5)" filter="url(#sh)"/>
<rect x="2503.5" y="756.7" width="209.5" height="87.2" rx="0" fill="#353535"/>
<rect x="2503.5" y="756.7" width="209.5" height="30" fill="#2f2f2f"/>
<rect x="2513.5" y="766.8" width="10" height="10" fill="#666"/>
<rect x="2503.5" y="786.7" width="209.5" height="1" fill="rgba(0,0,0,0.18)"/>
<text x="2533.5" y="776.7" font-size="14" fill="#999">FaceRestoreModelLo...</text>
<circle cx="2704" cy="800.7" r="4.3" fill="#7F7" stroke="#000" stroke-width="1.3"/>
<text x="2693" y="805.2" font-size="12" fill="#AAA" text-anchor="end">FACERESTORE_MODEL</text>
<rect x="2518.5" y="812.7" width="179.5" height="20" rx="10" fill="#222" stroke="#666" stroke-width="1"/>
<path d="M2534.5 817.7L2524.5 822.7L2534.5 827.7Z" fill="#DDD"/>
<path d="M2682 817.7L2692 822.7L2682 827.7Z" fill="#DDD"/>
<text x="2538.5" y="826.7" font-size="12" fill="#999">mo...</text>
<text x="2663" y="826.7" font-size="12" fill="#DDD" text-anchor="end">GFPGANv1.4.pth</text>
<rect x="2784.8" y="563.2" width="51.5" height="25.8" rx="5" fill="#303030"/>
<text x="2792.3" y="576.7" font-size="12" fill="#999">1.563s</text>
<rect x="2968.5" y="561.3" width="91.8" height="19.4" rx="5" fill="#0f1c10"/>
<text x="2975.5" y="576.8" font-size="12" fill="#fff" font-weight="bold">facerestor</text>
<rect x="3027.8" y="563.3" width="32.5" height="19.4" rx="5" fill="#0f1c10"/>
<text x="3044.1" y="576.8" font-size="12" fill="#fff" text-anchor="middle" font-weight="bold">#18</text>
<rect x="2786.8" y="585" width="276.3" height="137.6" rx="0" fill="rgba(0,0,0,0.5)" filter="url(#sh)"/>
<rect x="2784.8" y="583" width="276.3" height="137.6" rx="0" fill="#353535"/>
<rect x="2784.8" y="583" width="276.3" height="30" fill="#2f2f2f"/>
<rect x="2794.8" y="593.1" width="10" height="10" fill="#666"/>
<rect x="2784.8" y="613" width="276.3" height="1" fill="rgba(0,0,0,0.18)"/>
<text x="2814.8" y="603" font-size="14" fill="#999">FaceRestoreCFWithModel</text>
<circle cx="2794.8" cy="627" r="4" fill="#7F7"/>
<text x="2804.8" y="631.5" font-size="12" fill="#AAA">facerestore_model</text>
<circle cx="2794.8" cy="647" r="4" fill="#64B5F6"/>
<text x="2804.8" y="651.5" font-size="12" fill="#AAA">image</text>
<circle cx="3052.1" cy="627" r="4.3" fill="#64B5F6" stroke="#000" stroke-width="1.3"/>
<text x="3041.1" y="631.5" font-size="12" fill="#AAA" text-anchor="end">IMAGE</text>
<rect x="2799.8" y="659" width="246.3" height="20" rx="10" fill="#222" stroke="#666" stroke-width="1"/>
<path d="M2815.8 664L2805.8 669L2815.8 674Z" fill="#666"/>
<path d="M3030.1 664L3040.1 669L3030.1 674Z" fill="#DDD"/>
<text x="2819.8" y="673" font-size="12" fill="#999">facedetection</text>
<text x="3011.1" y="673" font-size="12" fill="#DDD" text-anchor="end">retinaface_resnet50</text>
<rect x="2799.8" y="683" width="246.3" height="20" rx="10" fill="#222" stroke="#666" stroke-width="1"/>
<path d="M2815.8 688L2805.8 693L2815.8 698Z" fill="#DDD"/>
<path d="M3030.1 688L3040.1 693L3030.1 698Z" fill="#DDD"/>
<text x="2819.8" y="697" font-size="12" fill="#999">codeformer_fidelity</text>
<text x="3011.1" y="697" font-size="12" fill="#DDD" text-anchor="end">0.10</text>
<rect x="2537" y="889.6" width="246.5" height="283.1" rx="8" fill="rgba(0,0,0,0.5)" filter="url(#sh)"/>
<rect x="2535" y="887.6" width="246.5" height="283.1" rx="8" fill="#653"/>
<path d="M2535 917.6V895.6A8 8 0 0 1 2543 887.6H2773.5A8 8 0 0 1 2781.5 895.6V917.6Z" fill="#432"/>
<circle cx="2550" cy="902.5" r="5" fill="#666"/>
<rect x="2535" y="917.6" width="246.5" height="1" fill="rgba(0,0,0,0.18)"/>
<text x="2565" y="907.6" font-size="14" fill="#999">Note</text>
<rect x="2545" y="928.8" width="226" height="232" fill="#222"/>
<g transform="translate(2549 0) scale(0.72 1)">
<text x="0" y="941.3" font-size="11.5" fill="#DDD" font-family="Liberation Mono, monospace">tile_width 1024</text>
<text x="0" y="953.2" font-size="11.5" fill="#DDD" font-family="Liberation Mono, monospace">tile_height 1024</text>
<text x="0" y="965.1" font-size="11.5" fill="#DDD" font-family="Liberation Mono, monospace">mask_flur 12</text>
<text x="0" y="977" font-size="11.5" fill="#DDD" font-family="Liberation Mono, monospace">tile_padding 64</text>
<text x="0" y="988.9" font-size="11.5" fill="#DDD" font-family="Liberation Mono, monospace">seam_fix_mode None</text>
<text x="0" y="1000.8" font-size="11.5" fill="#DDD" font-family="Liberation Mono, monospace">seam_fix_denoise 0.3</text>
<text x="0" y="1012.7" font-size="11.5" fill="#DDD" font-family="Liberation Mono, monospace">seam_fix_width 192</text>
<text x="0" y="1024.6" font-size="11.5" fill="#DDD" font-family="Liberation Mono, monospace">seam_fix_mask¥blur 32</text>
<text x="0" y="1036.5" font-size="11.5" fill="#DDD" font-family="Liberation Mono, monospace">seam_fix_padding 64</text>
</g>
</g>
</svg>
</body></html>
